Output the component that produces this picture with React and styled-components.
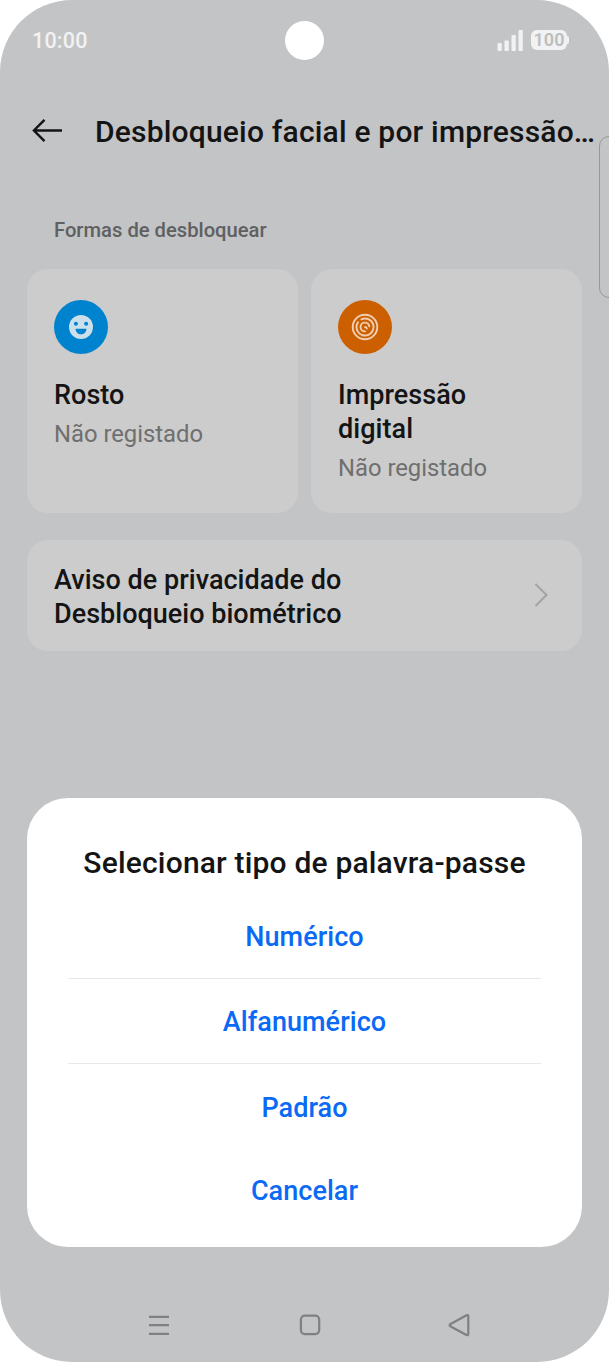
import styled, { createGlobalStyle } from 'styled-components'

const GlobalStyle = createGlobalStyle`
    *{
        box-sizing:border-box;
    }
    body{
        margin:0;
        background-color:white;
        font-family:Roboto, "Liberation Sans", sans-serif;
    }
`
const Phone = styled.div`
    position:relative;
    width:609px;
    height:1362px;
    display:flex;
    flex-direction:column;
    overflow:hidden;
    border-radius:72px;
    background-color:#c3c4c6;
    color:#141414;
`
const StatusBar = styled.div`
    height:81px;
    padding:0 40px 0 32px;
    display:grid;
    grid-template-columns:1fr 39px 1fr;
    align-items:center;
    color:#f2f2f2;
`
const Time = styled.div`
    font-size:21.5px;
    font-weight:500;
    line-height:26px;
    letter-spacing:0.2px;
`
const Camera = styled.div`
    width:39px;
    height:39px;
    margin-left:4px;
    border-radius:50%;
    background-color:white;
`
const StatusIcons = styled.div`
    padding-bottom:1px;
    display:flex;
    justify-content:flex-end;
    align-items:center;
    gap:7px;
`
const Battery = styled.div`
    display:flex;
    align-items:center;
`
const BatteryBody = styled.div`
    width:36px;
    height:20px;
    border-radius:6px;
    background-color:#f2f2f2;
    color:#bcbdbf;
    font-size:18px;
    font-weight:600;
    line-height:20px;
    text-align:center;
`
const BatteryTip = styled.div`
    width:2px;
    height:8px;
    border-radius:0 2px 2px 0;
    background-color:#f2f2f2;
`
const Header = styled.div`
    height:100px;
    padding-left:32px;
    display:flex;
    align-items:center;
    gap:32px;
`
const Title = styled.h1`
    margin:0;
    padding-top:2px;
    font-size:30px;
    font-weight:500;
    line-height:36px;
    letter-spacing:0.19px;
    white-space:nowrap;
`
const Content = styled.div`
    padding:35px 27px 0;
`
const Label = styled.div`
    padding-left:27px;
    font-size:20.2px;
    font-weight:500;
    line-height:28px;
    color:#5f6061;
`
const Cards = styled.div`
    margin-top:25px;
    display:grid;
    grid-template-columns:1fr 1fr;
    gap:13px;
`
const Card = styled.div`
    height:244px;
    padding:31px 27px;
    border-radius:21px;
    background-color:#ccc;
`
const Badge = styled.div`
    width:54px;
    height:54px;
    display:flex;
    align-items:center;
    justify-content:center;
    border-radius:50%;
    background-color:${props => props.$color};
`
const CardTitle = styled.div`
    width:${props => props.$width || 'auto'};
    margin-top:24px;
    font-size:27px;
    font-weight:500;
    line-height:34px;
    letter-spacing:0.05px;
`
const CardState = styled.div`
    margin-top:5px;
    font-size:23.8px;
    line-height:34px;
    color:#6f6f6f;
`
const Notice = styled.div`
    height:111px;
    margin-top:27px;
    padding:0 34px 2px 27px;
    display:flex;
    align-items:center;
    justify-content:space-between;
    border-radius:21px;
    background-color:#ccc;
`
const NoticeText = styled.div`
    width:310px;
    padding-top:5px;
    font-size:27px;
    font-weight:500;
    line-height:34px;
    letter-spacing:0.02px;
`
// handle of the edge panel, runs off the right side of the screen
const EdgePanel = styled.div`
    position:absolute;
    top:136px;
    right:-12px;
    width:22px;
    height:162px;
    border:1px solid #97989a;
    border-radius:10px;
`
const Dialog = styled.div`
    position:absolute;
    left:27px;
    right:27px;
    bottom:115px;
    height:449px;
    padding:47px 41px 0;
    border-radius:41px;
    background-color:white;
    text-align:center;
`
const DialogTitle = styled.h2`
    margin:0 -20px 13px;
    font-size:30px;
    font-weight:500;
    line-height:36px;
    letter-spacing:0.18px;
    white-space:nowrap;
`
const Option = styled.button`
    display:block;
    width:100%;
    height:${props => props.$height || 85}px;
    padding:2px 0 0;
    border:none;
    border-bottom:${props => props.$line ? '1px solid #e8e8e8' : 'none'};
    background:none;
    color:#0a6af5;
    font-family:inherit;
    font-size:27px;
    font-weight:500;
    letter-spacing:0.05px;
`
const NavBar = styled.div`
    height:74px;
    margin-top:auto;
    padding:0 138px 0 147px;
    display:flex;
    align-items:center;
    justify-content:space-between;
`

const SignalIcon = () => (
    <svg width="27" height="21" viewBox="0 0 27 21" fill="#f2f2f2">
        <rect x="0.5" y="13" width="4.3" height="8" rx="1" />
        <rect x="7.5" y="10.5" width="4.3" height="10.5" rx="1" />
        <rect x="14.5" y="5" width="4.3" height="16" rx="1" />
        <rect x="21.5" y="0" width="4.3" height="21" rx="1" />
    </svg>
)

const BackIcon = () => (
    <svg width="31" height="24" viewBox="0 0 31 24" fill="none" stroke="#141414" strokeWidth="2.4">
        <path d="M30 11.5H2M12.5 0.8L1.9 11.5L12.5 22.2" />
    </svg>
)

const FaceIcon = () => (
    <svg width="24" height="24" viewBox="0 0 24 24">
        <circle cx="12" cy="12" r="12" fill="#cce0ec" />
        <g fill="#0083cf">
            <circle cx="6.9" cy="8.7" r="2" />
            <circle cx="17.1" cy="8.7" r="2" />
            <path d="M6.6 13.7H17.4C17.4 17 15 19.3 12 19.3S6.6 17 6.6 13.7Z" />
        </g>
    </svg>
)

const FingerprintIcon = () => (
    <svg width="28" height="28" viewBox="0 0 28 28" fill="none" stroke="#f0cfb2" strokeWidth="1.9" strokeLinecap="round">
        <circle cx="14" cy="14" r="12.3" />
        <path d="M10.4 6.3A8.5 8.5 0 1 1 7 9.2" />
        <path d="M14 18.4A4.4 4.4 0 1 1 18.3 13.4" />
        <path d="M14 14.2Q15.4 13.8 15.8 15.6" />
    </svg>
)

const ChevronIcon = () => (
    <svg width="14" height="24" viewBox="0 0 14 24" fill="none" stroke="#a3a3a3" strokeWidth="2">
        <path d="M1.5 1L12.5 12L1.5 23" />
    </svg>
)

const MenuIcon = () => (
    <svg width="24" height="24" viewBox="0 0 24 24" stroke="#7f8081" strokeWidth="2.2">
        <path d="M2 3.8H22M2 12.2H22M2 20.8H22" />
    </svg>
)

const HomeIcon = () => (
    <svg width="24" height="24" viewBox="0 0 24 24" fill="none" stroke="#7f8081" strokeWidth="2.2">
        <rect x="3.9" y="2.6" width="18.3" height="18.5" rx="4" />
    </svg>
)

const ReturnIcon = () => (
    <svg width="24" height="24" viewBox="0 0 24 24" fill="none" stroke="#7f8081" strokeWidth="2.2" strokeLinejoin="round">
        <path d="M19.5 2.2L3.2 11.2Q2 12.2 3.2 13.2L19.5 22Q21.3 22.6 21.3 20.8V3.4Q21.3 1.6 19.5 2.2Z" />
    </svg>
)

const App = () => {
    return (
        <>
            <GlobalStyle />
            <Phone>
                <StatusBar>
                    <Time>10:00</Time>
                    <Camera />
                    <StatusIcons>
                        <SignalIcon />
                        <Battery>
                            <BatteryBody>100</BatteryBody>
                            <BatteryTip />
                        </Battery>
                    </StatusIcons>
                </StatusBar>
                <Header>
                    <BackIcon />
                    <Title>Desbloqueio facial e por impressão…</Title>
                </Header>
                <Content>
                    <Label>Formas de desbloquear</Label>
                    <Cards>
                        <Card>
                            <Badge $color="#0083cf"><FaceIcon /></Badge>
                            <CardTitle>Rosto</CardTitle>
                            <CardState>Não registado</CardState>
                        </Card>
                        <Card>
                            <Badge $color="#cc5f00"><FingerprintIcon /></Badge>
                            <CardTitle $width="160px">Impressão digital</CardTitle>
                            <CardState>Não registado</CardState>
                        </Card>
                    </Cards>
                    <Notice>
                        <NoticeText>Aviso de privacidade do Desbloqueio biométrico</NoticeText>
                        <ChevronIcon />
                    </Notice>
                </Content>
                <NavBar>
                    <MenuIcon />
                    <HomeIcon />
                    <ReturnIcon />
                </NavBar>
                <EdgePanel />
                <Dialog>
                    <DialogTitle>Selecionar tipo de palavra-passe</DialogTitle>
                    <Option $line>Numérico</Option>
                    <Option $line>Alfanumérico</Option>
                    <Option>Padrão</Option>
                    <Option $height={82}>Cancelar</Option>
                </Dialog>
            </Phone>
        </>
    )
}

export default App
